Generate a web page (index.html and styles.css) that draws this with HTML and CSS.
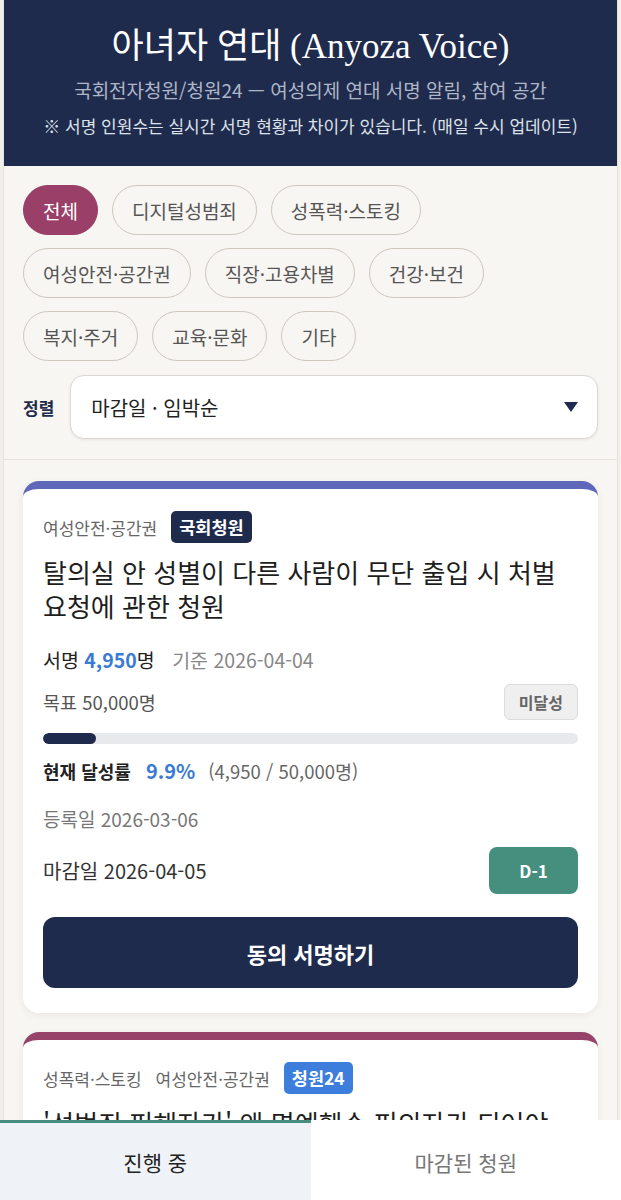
FILE: index.html
```html
<!DOCTYPE html>
<html lang="ko">
<head>
    <meta charset="UTF-8">
    <meta name="viewport" content="width=device-width, initial-scale=1.0">
    <title>아녀자 연대 (Anyoza Voice)</title>
    <link rel="stylesheet" href="styles.css">
</head>
<body>
    <div class="page">
        <header class="site-header">
            <h1>아녀자 연대 (Anyoza Voice)</h1>
            <p class="subtitle">국회전자청원/청원24 — 여성의제 연대 서명 알림, 참여 공간</p>
            <p class="notice">※ 서명 인원수는 실시간 서명 현황과 차이가 있습니다. (매일 수시 업데이트)</p>
        </header>

        <!-- Filters -->
        <section class="controls">
            <div class="chips">
                <button class="chip active">전체</button>
                <button class="chip">디지털성범죄</button>
                <button class="chip">성폭력·스토킹</button>
                <button class="chip">여성안전·공간권</button>
                <button class="chip">직장·고용차별</button>
                <button class="chip">건강·보건</button>
                <button class="chip">복지·주거</button>
                <button class="chip">교육·문화</button>
                <button class="chip">기타</button>
            </div>

            <div class="sort-row">
                <label class="sort-label" for="sort">정렬</label>
                <div class="sort-box">
                    <select id="sort">
                        <option>마감일 · 임박순</option>
                        <option>서명 많은순</option>
                        <option>등록일순</option>
                    </select>
                    <svg class="sort-arrow" width="14" height="10" viewBox="0 0 14 10"><path d="M0 0h14L7 10z" fill="#1f2b4d"/></svg>
                </div>
            </div>
        </section>

        <!-- Petition list -->
        <section class="list">
            <article class="card bar-assembly">
                <div class="card-meta">
                    <span class="category">여성안전·공간권</span>
                    <span class="source source-assembly">국회청원</span>
                </div>
                <h2 class="card-title">탈의실 안 성별이 다른 사람이 무단 출입 시 처벌 요청에 관한 청원</h2>
                <div class="signs">서명 <strong class="num">4,950</strong>명 <span class="as-of">기준 2026-04-04</span></div>
                <div class="goal-row">
                    <span class="goal">목표 50,000명</span>
                    <span class="state">미달성</span>
                </div>
                <div class="progress"><div class="progress-fill" style="width: 9.9%"></div></div>
                <div class="rate">
                    <strong>현재 달성률</strong>
                    <span class="rate-num">9.9%</span>
                    <span class="rate-detail">(4,950 / 50,000명)</span>
                </div>
                <div class="registered">등록일 2026-03-06</div>
                <div class="deadline-row">
                    <span class="deadline">마감일 2026-04-05</span>
                    <span class="dday">D-1</span>
                </div>
                <button class="sign-btn">동의 서명하기</button>
            </article>

            <article class="card bar-gov">
                <div class="card-meta">
                    <span class="category">성폭력·스토킹</span>
                    <span class="category">여성안전·공간권</span>
                    <span class="source source-gov">청원24</span>
                </div>
                <h2 class="card-title">'성범죄 피해자가' 왜 명예훼손 피의자가 되어야 합니까</h2>
                <div class="signs">서명 <strong class="num">1,204</strong>명 <span class="as-of">기준 2026-04-04</span></div>
            </article>
        </section>
    </div>

    <nav class="tabbar">
        <button class="tab active">진행 중</button>
        <button class="tab">마감된 청원</button>
    </nav>
</body>
</html>
```

FILE: styles.css
```css
* {
    margin: 0;
    padding: 0;
    box-sizing: border-box;
}

body {
    font-family: "Noto Sans CJK KR", "Noto Sans", sans-serif;
    background: #f1efea;
    color: #222;
}

.page {
    margin: 0 3px;
    min-height: 1200px;
    background: #f8f6f2;
    border-left: 1px solid #e6e2db;
    border-right: 1px solid #e6e2db;
}

/* Header */
.site-header {
    background: #1f2b4d;
    color: white;
    text-align: center;
    padding: 23px 6px 27px;
}

.site-header h1 {
    font-family: "Liberation Serif", "Noto Sans CJK KR", serif;
    font-weight: 400;
    font-size: 35px;
    line-height: 48px;
}

.subtitle {
    font-size: 19px;
    line-height: 26px;
    color: #aeb6c7;
    margin-top: 6px;
}

.notice {
    font-size: 17px;
    line-height: 26px;
    color: #dde1e9;
    margin-top: 10px;
}

/* Filters */
.controls {
    padding: 19px 19px 20px;
    border-bottom: 1px solid #e6e2db;
}

.chips {
    display: flex;
    flex-wrap: wrap;
    gap: 13px 14px;
}

.chip {
    height: 50px;
    padding: 0 19px;
    border: 1.5px solid #cdc7bd;
    border-radius: 25px;
    background: #f8f6f2;
    color: #555;
    font-family: inherit;
    font-size: 19px;
}

.chip.active {
    background: #993f68;
    border-color: #993f68;
    color: white;
}

.sort-row {
    display: flex;
    align-items: center;
    gap: 16px;
    margin-top: 14px;
}

.sort-label {
    font-size: 17px;
    font-weight: 700;
    color: #1f2b4d;
}

.sort-box {
    position: relative;
    flex: 1;
}

.sort-box select {
    appearance: none;
    width: 100%;
    height: 64px;
    padding: 0 20px;
    border: 1px solid #dcd9d4;
    border-radius: 14px;
    background: white;
    box-shadow: 0 1px 3px rgba(0,0,0,0.08);
    font-family: inherit;
    font-size: 20px;
    color: #222;
}

.sort-arrow {
    position: absolute;
    right: 20px;
    top: 27px;
}

/* Cards */
.list {
    padding: 21px 19px 100px;
    display: flex;
    flex-direction: column;
    gap: 19px;
}

.card {
    background: white;
    border-radius: 16px;
    border-top: 8px solid #5f68b8;
    padding: 22px 20px 25px;
    box-shadow: 0 2px 8px rgba(0,0,0,0.06);
}

.card.bar-gov {
    border-top-color: #974369;
}

.card-meta {
    display: flex;
    align-items: center;
    gap: 14px;
}

.category {
    font-size: 17px;
    color: #666;
}

.source {
    font-size: 17.5px;
    font-weight: 700;
    color: white;
    padding: 0 8px;
    height: 32px;
    line-height: 32px;
    border-radius: 5px;
}

.source-assembly {
    background: #1f2b4d;
}

.source-gov {
    background: #3d7ddb;
}

.card-title {
    font-size: 26px;
    font-weight: 400;
    line-height: 34px;
    color: #1e1e1e;
    margin-top: 12px;
}

.signs {
    font-size: 19.5px;
    line-height: 26px;
    margin-top: 24px;
}

.num {
    color: #3a7bd5;
}

.as-of {
    color: #888;
    margin-left: 12px;
}

.goal-row,
.deadline-row {
    display: flex;
    justify-content: space-between;
    align-items: center;
}

.goal-row {
    margin-top: 11px;
}

.goal {
    font-size: 18.5px;
    color: #555;
}

.state {
    height: 36px;
    line-height: 34px;
    padding: 0 14px;
    background: #efefef;
    border: 1px solid #dcdcdc;
    border-radius: 6px;
    font-size: 16px;
    font-weight: 700;
    color: #666;
}

.progress {
    height: 11px;
    margin-top: 13px;
    background: #e8e9ed;
    border-radius: 6px;
    overflow: hidden;
}

.progress-fill {
    height: 100%;
    background: #1f2b4d;
    border-radius: 6px;
}

.rate {
    font-size: 18px;
    line-height: 26px;
    margin-top: 14px;
}

.rate strong {
    color: #222;
}

.rate-num {
    color: #3a7bd5;
    font-weight: 700;
    font-size: 20px;
    margin: 0 8px 0 10px;
}

.rate-detail {
    color: #666;
    font-size: 18.5px;
}

.registered {
    font-size: 19px;
    line-height: 26px;
    color: #777;
    margin-top: 22px;
}

.deadline-row {
    margin-top: 15px;
}

.deadline {
    font-size: 20px;
    color: #333;
}

.dday {
    width: 89px;
    height: 47px;
    line-height: 47px;
    text-align: center;
    background: #468f7e;
    border-radius: 8px;
    color: white;
    font-weight: 700;
    font-size: 17px;
}

.sign-btn {
    display: block;
    width: 100%;
    height: 71px;
    margin-top: 23px;
    border: none;
    border-radius: 12px;
    background: #1f2b4d;
    color: white;
    font-family: inherit;
    font-size: 22px;
    font-weight: 700;
}

/* Bottom tabs */
.tabbar {
    position: fixed;
    left: 0;
    right: 0;
    bottom: 0;
    height: 80px;
    display: flex;
    background: white;
    border-top: 1px solid #e3e3e3;
}

.tab {
    flex: 1;
    border: none;
    border-top: 3px solid transparent;
    margin-top: -1px;
    background: white;
    font-family: inherit;
    font-size: 21px;
    color: #777;
}

.tab.active {
    border-top-color: #468f7e;
    background: #eff2f6;
    color: #222;
}
```
